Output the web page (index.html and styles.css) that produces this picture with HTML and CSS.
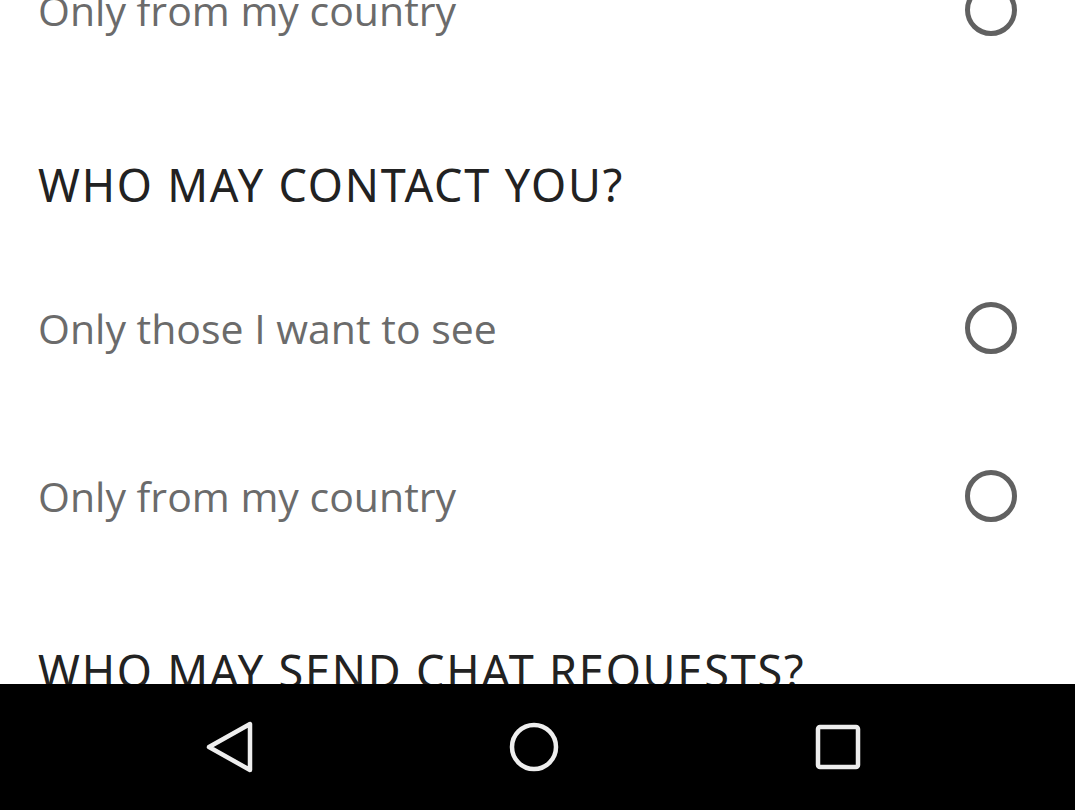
FILE: index.html
```html
<!DOCTYPE html>
<html>
<head>
<meta charset="utf-8">
<link rel="stylesheet" href="styles.css">
</head>
<body>
<div class="screen">
  <div class="content">
    <div class="list">
      <div class="row"><span class="label">Only from my country</span><span class="radio"></span></div>
      <div class="heading">WHO MAY CONTACT YOU?</div>
      <div class="row"><span class="label">Only those I want to see</span><span class="radio"></span></div>
      <div class="row"><span class="label">Only from my country</span><span class="radio"></span></div>
      <div class="heading">WHO MAY SEND CHAT REQUESTS?</div>
    </div>
  </div>
  <nav class="navbar">
    <svg class="nav-icon" width="60" height="60" viewBox="0 0 60 60">
      <path d="M50 7 L50 53 L9 30 Z" fill="none" stroke="#eeeeee" stroke-width="4.5" stroke-linejoin="round"/>
    </svg>
    <svg class="nav-icon" width="60" height="60" viewBox="0 0 60 60">
      <circle cx="30" cy="30" r="22" fill="none" stroke="#eeeeee" stroke-width="4.5"/>
    </svg>
    <svg class="nav-icon" width="60" height="60" viewBox="0 0 60 60">
      <rect x="10" y="10" width="40" height="40" rx="2" fill="none" stroke="#eeeeee" stroke-width="4.5"/>
    </svg>
  </nav>
</div>
</body>
</html>
```
FILE: styles.css
```css
* { box-sizing: border-box; }
html, body { margin: 0; padding: 0; background: #fff; }
.screen {
  width: 1075px;
  height: 810px;
  display: flex;
  flex-direction: column;
  overflow: hidden;
}
.content {
  height: 684px;
  overflow: hidden;
  flex: none;
}
.list {
  margin-top: -74px;
  padding: 0 58px 0 38px;
}
.row {
  height: 168px;
  display: flex;
  align-items: center;
  justify-content: space-between;
}
.label {
  font-family: "Open Sans", "Noto Sans", sans-serif;
  font-size: 41px;
  color: #6b6b6b;
}
.radio {
  width: 52px;
  height: 52px;
  border: 5px solid #616161;
  border-radius: 50%;
  flex: none;
}
.heading {
  height: 150px;
  padding-top: 61px;
  font-family: "Noto Sans", "Open Sans", sans-serif;
  font-size: 45px;
  line-height: 60px;
  color: #222;
  letter-spacing: 1.8px;
}
.navbar {
  flex: 1;
  background: #000;
  display: flex;
  align-items: center;
  justify-content: center;
  gap: 244px;
  padding-right: 7px;
}
.nav-icon { display: block; }
```
